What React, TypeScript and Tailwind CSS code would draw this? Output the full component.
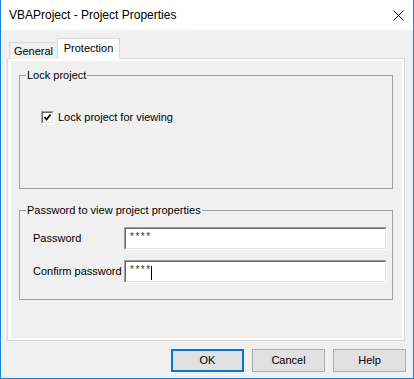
import React from 'react';

const font = { fontFamily: '"Liberation Sans", Arial, sans-serif' };

function Sunken({ className, children }: { className?: string; children?: React.ReactNode }) {
  // classic win32 sunken edge: two lines dark at top-left, light at bottom-right
  return (
    <div className={`border border-t-[#a0a0a0] border-l-[#a0a0a0] border-r-white border-b-white ${className ?? ''}`}>
      <div className="h-full w-full border border-t-[#696969] border-l-[#696969] border-r-[#e3e3e3] border-b-[#e3e3e3] bg-white">
        {children}
      </div>
    </div>
  );
}

function Group({ title, className, children }: { title: string; className?: string; children?: React.ReactNode }) {
  return (
    <fieldset className={`m-0 w-[374px] border border-[#a0a0a0] p-0 ${className ?? ''}`}>
      <legend className="ml-[6px] px-[1px] leading-[16px] text-[11px] text-black">{title}</legend>
      {children}
    </fieldset>
  );
}

function Button({ label, primary }: { label: string; primary?: boolean }) {
  return (
    <button
      className={`h-[23px] w-[73px] bg-[#e1e1e1] text-[11px] text-black ${
        primary ? 'border-2 border-[#0078d7]' : 'border border-[#adadad]'
      }`}
    >
      {label}
    </button>
  );
}

export default function App() {
  return (
    <div
      style={font}
      className="flex h-[379px] w-[414px] flex-col border-x border-b border-[#1883d7] bg-[#f0f0f0] text-[11px] text-black"
    >
      {/* title bar */}
      <div className="flex h-[30px] shrink-0 items-center justify-between bg-white pl-[8px] pr-[9px]">
        <span className="text-[12px]">VBAProject - Project Properties</span>
        <svg width="11" height="11" viewBox="0 0 11 11">
          <path d="M0.5 0.5 L10.5 10.5 M10.5 0.5 L0.5 10.5" stroke="#000" strokeWidth="1" />
        </svg>
      </div>

      <div className="flex flex-col pl-[6px] pt-[8px]">
        {/* tabs */}
        <div className="relative z-10 -mb-px flex h-[21px] items-end pl-[2px]">
          <div className="flex h-[17px] w-[48px] items-center justify-center border-l border-t border-[#d9d9d9] bg-[#f0f0f0] pt-[1px]">
            General
          </div>
          <div className="flex h-[21px] w-[63px] items-center justify-center border-x border-t border-[#d9d9d9] bg-white pb-[1px]">
            Protection
          </div>
        </div>

        {/* tab panel */}
        <div className="h-[283px] w-[398px] border border-[#d9d9d9] bg-white p-[2px] pl-[3px]">
          <div className="flex h-full flex-col bg-[#f0f0f0] pl-[8px] pt-[6px]">
            <Group title="Lock project" className="h-[122px]">
              <div className="flex items-center gap-[4px] pl-[21px] pt-[26px]">
                <Sunken className="h-[13px] w-[13px]">
                  <svg width="9" height="9" viewBox="0 0 9 9">
                    <path d="M1.5 4 L3.5 6.5 L7.5 1.5" stroke="#000" strokeWidth="1.8" fill="none" />
                  </svg>
                </Sunken>
                <span>Lock project for viewing</span>
              </div>
            </Group>

            <Group title="Password to view project properties" className="mt-[13px] h-[98px]">
              <div className="flex flex-col gap-[10px] pl-[13px] pt-[9px]">
                <div className="flex items-center">
                  <span className="w-[91px]">Password</span>
                  <Sunken className="h-[23px] w-[263px]">
                    <div className="pl-[4px] pt-[2px] text-[10px] leading-[12px] tracking-[1.5px] text-[#3a3326]">****</div>
                  </Sunken>
                </div>
                <div className="flex items-center">
                  <span className="w-[91px]">Confirm password</span>
                  <Sunken className="h-[23px] w-[263px]">
                    <div className="flex items-start pl-[4px] pt-[2px] text-[10px] leading-[12px] tracking-[1.5px] text-[#3a3326]">
                      ****
                      <span className="ml-[-1px] mt-[2px] inline-block h-[14px] w-px bg-black" />
                    </div>
                  </Sunken>
                </div>
              </div>
            </Group>
          </div>
        </div>
      </div>

      {/* buttons */}
      <div className="mt-[8px] flex justify-end gap-[8px] pr-[7px]">
        <Button label="OK" primary />
        <Button label="Cancel" />
        <Button label="Help" />
      </div>
    </div>
  );
}
